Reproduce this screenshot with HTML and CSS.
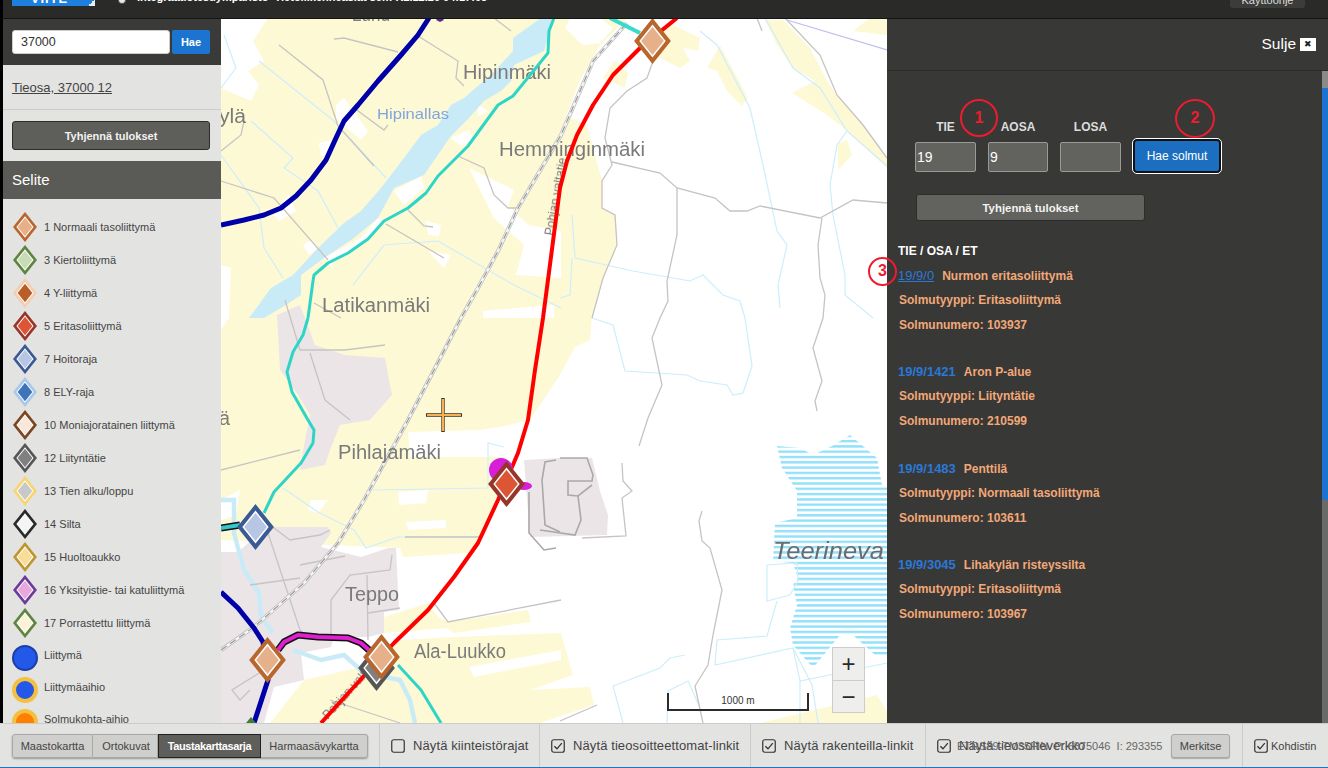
FILE: index.html
```html
<!DOCTYPE html>
<html lang="fi">
<head>
<meta charset="utf-8">
<title>Viite</title>
<link rel="stylesheet" href="styles.css">
</head>
<body>
<svg class="defs" width="0" height="0">
  <defs>
    <symbol id="dia" viewBox="0 0 24 30">
      <polygon class="do" points="12,0 24,15 12,30 0,15"/>
      <polygon points="12,4.2 20.6,15 12,25.8 3.4,15" fill="#fff"/>
      <polygon class="di" points="12,5.8 19.4,15 12,24.2 4.6,15"/>
    </symbol>
    <symbol id="chk" viewBox="0 0 14 14">
      <rect x="0.75" y="0.75" width="12.5" height="12.5" rx="2" fill="none" stroke="#333" stroke-width="1.2"/>
      <path d="M3.4 7.2 L6 9.8 L10.8 4.2" fill="none" stroke="#333" stroke-width="1.3"/>
    </symbol>
    <symbol id="unchk" viewBox="0 0 14 14">
      <rect x="0.75" y="0.75" width="12.5" height="12.5" rx="2" fill="none" stroke="#333" stroke-width="1.2"/>
    </symbol>
    <pattern id="marsh" width="10" height="5.3" patternUnits="userSpaceOnUse">
      <rect width="10" height="2.4" fill="#93e0fb"/>
    </pattern>
  </defs>
</svg>

<header class="topbar">
  <div class="logo"><span>VIITE</span><i class="fold"></i></div>
  <span class="dot"></span>
  <span class="envtext">Integraatiotestiympäristö  Tietoliikenneasiat ser.: K1.12.20 04:17:05</span>
  <a class="help">Käyttöohje</a>
</header>

<main class="main">
  <aside class="side">
    <div class="search">
      <input class="search-input" value="37000">
      <button class="search-btn">Hae</button>
    </div>
    <div class="hit"><a class="hit-link">Tieosa, 37000 12</a></div>
    <div class="clear-wrap"><button class="clear-btn">Tyhjennä tulokset</button></div>
    <h2 class="legend-title">Selite</h2>
    <ul class="legend">
      <li class="row t1"><svg class="dsym"><use href="#dia"/></svg>1 Normaali tasoliittymä</li>
      <li class="row t3"><svg class="dsym"><use href="#dia"/></svg>3 Kiertoliittymä</li>
      <li class="row t4"><svg class="dsym"><use href="#dia"/></svg>4 Y-liittymä</li>
      <li class="row t5"><svg class="dsym"><use href="#dia"/></svg>5 Eritasoliittymä</li>
      <li class="row t7"><svg class="dsym"><use href="#dia"/></svg>7 Hoitoraja</li>
      <li class="row t8"><svg class="dsym"><use href="#dia"/></svg>8 ELY-raja</li>
      <li class="row t10"><svg class="dsym"><use href="#dia"/></svg>10 Moniajoratainen liittymä</li>
      <li class="row t12"><svg class="dsym"><use href="#dia"/></svg>12 Liityntätie</li>
      <li class="row t13"><svg class="dsym"><use href="#dia"/></svg>13 Tien alku/loppu</li>
      <li class="row t14"><svg class="dsym"><use href="#dia"/></svg>14 Silta</li>
      <li class="row t15"><svg class="dsym"><use href="#dia"/></svg>15 Huoltoaukko</li>
      <li class="row t16"><svg class="dsym"><use href="#dia"/></svg>16 Yksityistie- tai katuliittymä</li>
      <li class="row t17"><svg class="dsym"><use href="#dia"/></svg>17 Porrastettu liittymä</li>
      <li class="crow first"><span class="circ c-a"></span>Liittymä</li>
      <li class="crow"><span class="circ c-b"></span>Liittymäaihio</li>
      <li class="crow"><span class="circ c-c"></span>Solmukohta-aihio</li>
    </ul>
  </aside>

  <section class="map">
    <svg class="mapsvg" viewBox="221 19 666 704" width="666" height="704">
      <rect x="221" y="19" width="666" height="704" fill="#fff"/>
      <g class="yellow tile">
        <polygon points="268,18 253,41 264,61 248,71 259,85 251,101 221,88 221,265 231,268 229,318 221,330 221,540 400,548 403,557 468,553 481,537 498,495 505,457 410,457 408,432 480,430 500,427 530,420 560,375 575,347 590,340 592,318 603,278 617,245 615,215 602,208 602,181 595,155 587,125 570,118 563,125 580,80 600,45 628,18"/>
        <polygon points="673,25 700,38 698,51 683,48 690,61 680,68 660,58 640,40"/>
        <polygon points="628,73 625,88 603,78 615,60"/>
        <polygon points="384,617 428,603 438,617 448,622 528,610 531,622 454,633 448,628 384,633"/>
        <polygon points="270,723 304,680 370,665 400,640 454,637 561,633 573,675 530,690 590,687 594,705 540,723"/>
        <polygon points="760,723 877,695 887,711 887,723"/>
        <polygon points="765,20 783,20 810,48 827,81 837,95 863,125 887,158 887,168 847,131 827,115 792,93 815,81 793,68 777,45"/>
        <polygon points="853,31 870,18 887,18 887,35"/>
        <polygon points="838,143 847,140 852,155 838,170"/>
        <polygon points="707,68 720,45 748,98 742,106 727,91 717,71"/>
      </g>
      <g class="whites tile">
        <polygon points="336,105 344,98 368,131 361,140 336,118"/>
        <polygon points="319,143 331,140 329,155 321,156"/>
        <polygon points="274,215 288,195 296,211 279,221"/>
        <polygon points="303,245 311,240 318,248 309,255"/>
        <polygon points="394,191 421,176 424,188 404,205"/>
        <polygon points="324,258 361,238 378,218 384,221 368,241 331,261 334,270"/>
        <polygon points="451,138 469,130 473,140 461,146"/>
        <polygon points="478,105 488,111 478,116"/>
        <polygon points="469,168 514,190 508,205 528,225 561,231 561,278 516,275 524,245 494,218"/>
        <polygon points="426,221 441,225 439,236 428,235"/>
        <polygon points="428,251 451,255 444,268"/>
        <polygon points="483,311 554,305 554,318 483,318"/>
        <polygon points="398,492 428,490 426,503 399,505"/>
        <polygon points="406,522 446,520 446,528 408,530"/>
        <polygon points="311,500 328,500 318,513 308,510"/>
        <polygon points="565,28 583,45 600,43 613,28 600,18 570,18"/>
        <polygon points="469,667 561,650 561,660 474,677"/>
        <polygon points="221,500 240,490 236,515 221,520"/>
      </g>
      <g class="resid tile">
        <polygon points="277,315 300,305 315,345 345,355 385,358 392,395 370,420 340,425 330,450 325,465 300,470 305,440 310,415 298,395 280,370"/>
        <polygon points="221,552 238,552 266,527 328,527 331,533 321,547 361,557 388,548 396,548 399,610 384,612 384,633 368,637 334,637 331,647 301,653 304,680 274,687 264,723 221,723"/>
        <polygon points="524,460 560,458 592,458 600,491 608,515 607,535 530,537"/>
      </g>
      <polygon class="water tile" points="249,318 271,288 293,275 318,248 344,223 361,211 381,188 404,158 421,135 438,125 451,105 464,98 493,73 513,51 513,38 541,18 554,18 544,51 514,65 511,81 501,91 484,101 469,118 451,136 424,175 394,188 378,218 354,238 324,258 301,275 301,295 281,308 264,318"/>
      <polygon class="tile" fill="url(#marsh)" points="777,446 800,448 813,455 832,446 850,435 877,458 882,485 887,485 887,655 875,655 853,635 840,635 813,668 793,645 790,628 797,605 793,585 798,578 793,563 773,561 775,523 797,518 797,491 782,468"/>
      <polyline class="stream tile" points="293,650 321,660 344,655 364,673 400,680 410,700 415,723"/>
      <polyline class="stream tile" points="221,500 234,500 234,533 244,570 259,593 261,617 273,633"/>
      <g class="wl tile">
        <polyline points="259,61 334,121 386,178"/>
        <polyline points="251,121 293,158 284,168 318,191 338,228"/>
        <polyline points="224,35 236,68 221,88"/>
        <polyline points="221,155 259,208 264,248 283,278"/>
        <polyline points="353,285 384,245 438,241 514,285 561,308"/>
        <polyline points="700,31 717,45 750,108 763,165 777,231 787,245 778,285 780,308"/>
        <polyline points="765,18 793,68 820,88 847,131 837,145 830,185 833,215 845,275 845,295 873,318"/>
        <polyline points="847,131 887,166"/>
        <polyline points="572,215 575,258 633,271 690,281 703,275 723,295 740,301 745,318 752,366 743,393 733,395 727,385 700,381 687,375 625,371 613,325 592,318"/>
        <polyline points="572,258 570,295 560,298"/>
        <polyline points="767,565 797,563 798,581 790,595 767,601 767,565"/>
        <polyline points="777,601 767,636 717,640 715,665 793,648 800,681 887,663"/>
        <polyline points="613,686 660,668 670,658 685,655"/>
        <polyline points="613,686 623,723"/>
        <polyline points="667,723 668,691 688,681 700,708"/>
        <polyline points="283,488 318,512 354,530 366,548 398,537 481,537"/>
        <polyline points="373,490 488,488 488,443 504,447"/>
        <polyline points="800,681 800,723"/>
        <polyline points="793,648 812,685 818,723"/>
      </g>
      <g class="rd tile">
        <polyline points="279,45 323,80 338,126 374,166"/>
        <polyline points="334,39 344,38 398,52"/>
        <polyline points="418,36 458,61 456,78 464,86"/>
        <polyline points="354,108 384,130 388,125"/>
        <polyline points="221,181 274,198 328,260"/>
        <polyline points="221,151 241,135 244,121"/>
        <polyline points="408,210 424,226 433,227"/>
        <polyline points="386,224 444,258"/>
        <polyline points="458,156 484,168 494,195 508,208 518,208"/>
        <polyline points="494,18 511,31"/>
        <polyline points="314,303 341,318"/>
        <polyline points="653,61 647,78 627,91 610,108 605,138 612,165 602,181 602,208 615,215 617,245 603,278 592,318"/>
        <polyline points="612,162 660,173 677,188 715,198 730,211 747,211 760,206 820,218 853,200 887,203"/>
        <polyline points="677,188 677,235 667,281 668,301 660,318 652,338 662,385 648,418 639,446"/>
        <polyline points="822,218 818,245 820,278 825,295 823,318 813,348 822,381 815,401 817,411"/>
        <polyline points="785,18 820,55 837,95 863,125 887,158"/>
        <polyline points="757,18 762,31"/>
        <polyline points="702,511 699,521 702,541 710,548 722,590 713,635 708,665 695,686 703,723"/>
        <polyline points="622,463 623,481 632,491 622,498 626,536 582,538"/>
        <polyline points="561,600 448,622 434,603"/>
        <polyline points="597,705 560,721"/>
        <polyline points="270,525 290,540 320,535 330,530"/>
        <polyline points="266,527 300,630 310,640"/>
        <polyline points="300,565 345,556"/>
        <polyline points="250,585 300,578"/>
        <polyline points="331,640 331,600 350,575 390,570 392,555"/>
        <polyline points="367,575 368,640"/>
        <polyline points="368,613 400,608"/>
        <polyline points="405,537 481,537"/>
        <polyline points="280,660 232,690 240,700 250,690"/>
        <polyline points="330,700 400,723"/>
        <polyline points="285,300 300,350 345,350 385,345"/>
        <polyline points="310,353 325,400 350,420"/>
        <polyline points="221,470 300,450"/>
      </g>
      <g class="rd dark tile">
        <polyline points="560,458 587,458 593,475 592,481 568,481 568,495 578,496 592,485"/>
        <polyline points="578,496 581,520 575,535 540,530"/>
        <polyline points="529,492 529,533 544,550 556,548"/>
        <polyline points="556,460 545,462 542,480 545,525 560,532"/>
      </g>
      <g class="rail tile">
        <polyline class="r1" points="221,650 254,627 304,583 338,543 364,500 408,420 461,318 478,288 498,251 518,208 561,135 593,61 627,23"/>
        <polyline class="r2" points="221,650 254,627 304,583 338,543 364,500 408,420 461,318 478,288 498,251 518,208 561,135 593,61 627,23"/>
        <polyline class="r3" points="221,650 254,627 304,583 338,543 364,500 408,420 461,318 478,288 498,251 518,208 561,135 593,61 627,23"/>
      </g>
      <polyline class="purple" points="787,20 887,50"/>
      <g class="labels tile">
        <text x="463" y="79" textLength="88" lengthAdjust="spacingAndGlyphs">Hipinmäki</text>
        <text x="499" y="156" textLength="146" lengthAdjust="spacingAndGlyphs">Hemminginmäki</text>
        <text x="322" y="312" textLength="108" lengthAdjust="spacingAndGlyphs">Latikanmäki</text>
        <text x="338" y="459" textLength="103" lengthAdjust="spacingAndGlyphs">Pihlajamäki</text>
        <text x="345" y="601" textLength="54" lengthAdjust="spacingAndGlyphs">Teppo</text>
        <text x="414" y="658" textLength="92" lengthAdjust="spacingAndGlyphs">Ala-Luukko</text>
        <text x="219" y="123" textLength="27" lengthAdjust="spacingAndGlyphs">ylä</text>
        <text x="219" y="425" textLength="11" lengthAdjust="spacingAndGlyphs">ä</text>
        <text x="352" y="21" textLength="38" lengthAdjust="spacingAndGlyphs">Lund</text>
        <text class="teeri" x="773" y="559" textLength="111" lengthAdjust="spacingAndGlyphs">Teerineva</text>
        <text class="lake" x="377" y="119" textLength="72" lengthAdjust="spacingAndGlyphs">Hipinallas</text>
      </g>
      <text class="roadname tile" transform="translate(553,236) rotate(-80)">Pohjan valtatie</text>
      <text class="roadname tile" transform="translate(328,720) rotate(-48)">Pohjan valtatie</text>
      <g class="roads">
        <polyline class="blue" points="221,225 244,220 264,215 281,208 296,196 311,180 326,160 336,138 344,121 358,105 378,81 401,55 418,35 429,18"/>
        <polyline class="blue" points="221,592 238,608 254,628 263,642 268,680 254,723"/>
        <polyline class="teal" points="308,318 303,335 293,352 287,372 292,392 308,420 314,430 313,443 301,463 274,492 264,513"/>
        <polyline class="teal" points="308,318 313,281 314,275 328,263 348,253 368,239 384,221 408,208 426,193 438,176 468,146 498,105 513,96 548,53 549,31 554,18"/>
        <polyline class="teal" points="398,665 421,690 441,723"/>
        <polyline class="tealw" points="610,18 640,33"/>
        <polyline class="tb" points="221,528 240,525"/>
        <polyline class="tbi" points="221,528 240,525"/>
        <polyline class="red" points="677,18 640,48 613,75 593,105 577,135 567,161 560,188 543,318 535,370 528,420 518,453 498,500 478,543 454,577 428,610 394,643 321,723"/>
        <polyline class="mb" points="278,650 284,642 298,635 318,637 348,638 361,643 369,650"/>
        <polyline class="mg" points="278,650 284,642 298,635 318,637 348,638 361,643 369,650"/>
      </g>
      <g class="blob">
        <circle cx="501" cy="470" r="12"/>
        <ellipse cx="524" cy="486" rx="8" ry="4"/>
      </g>
      <polygon class="tiny-g" points="251,717 256,723 246,723"/>
      <polygon class="tiny-p" points="440,16 444,20 440,22 436,20"/>
      <svg class="t12" x="358" y="645" width="37" height="46"><use href="#dia"/></svg>
      <svg class="t1" x="634" y="18" width="37" height="46"><use href="#dia"/></svg>
      <svg class="t7" x="237" y="504" width="37" height="46"><use href="#dia"/></svg>
      <svg class="t5" x="488" y="461" width="37" height="46"><use href="#dia"/></svg>
      <svg class="t1" x="249" y="637" width="37" height="46"><use href="#dia"/></svg>
      <svg class="t1" x="363" y="634" width="37" height="46"><use href="#dia"/></svg>
      <g class="cross">
        <path class="cross-o" d="M443 398V432M426 415H462"/>
        <path class="cross-i" d="M443 399V431M427 415H461"/>
      </g>
      <path class="scale" d="M668 693V710H808V693"/>
      <text class="scale-t" x="738" y="704">1000 m</text>
    </svg>
    <div class="zoomctl">
      <button class="zbtn">+</button>
      <button class="zbtn">−</button>
    </div>
  </section>

  <section class="panel">
    <div class="panel-head">
      <span class="close-t">Sulje</span><span class="close-x">✖</span>
    </div>
    <div class="panel-body">
      <div class="panel-content">
        <div class="form">
          <div class="field w61"><label>TIE</label><input class="fld" value="19"></div>
          <div class="field w60"><label>AOSA</label><input class="fld" value="9"></div>
          <div class="field w61"><label>LOSA</label><input class="fld" value=""></div>
          <button class="find">Hae solmut</button>
        </div>
        <button class="clear2">Tyhjennä tulokset</button>
        <div class="res-h">TIE / OSA / ET</div>
        <div class="group">
          <div class="rrow"><a class="rlink under">19/9/0</a><span class="rname">Nurmon eritasoliittymä</span></div>
          <div class="rrow det">Solmutyyppi: Eritasoliittymä</div>
          <div class="rrow det">Solmunumero: 103937</div>
        </div>
        <div class="group">
          <div class="rrow"><a class="rlink">19/9/1421</a><span class="rname">Aron P-alue</span></div>
          <div class="rrow det">Solmutyyppi: Liityntätie</div>
          <div class="rrow det">Solmunumero: 210599</div>
        </div>
        <div class="group">
          <div class="rrow"><a class="rlink">19/9/1483</a><span class="rname">Penttilä</span></div>
          <div class="rrow det">Solmutyyppi: Normaali tasoliittymä</div>
          <div class="rrow det">Solmunumero: 103611</div>
        </div>
        <div class="group">
          <div class="rrow"><a class="rlink">19/9/3045</a><span class="rname">Lihakylän risteyssilta</span></div>
          <div class="rrow det">Solmutyyppi: Eritasoliittymä</div>
          <div class="rrow det">Solmunumero: 103967</div>
        </div>
      </div>
      <div class="sbar"><div class="sb-cap"></div><div class="sb-thumb"></div><div class="sb-rest"></div></div>
    </div>
  </section>

  <span class="mark m1">1</span>
  <span class="mark m2">2</span>
  <span class="mark m3">3</span>
</main>

<footer class="foot">
  <div class="f-sec f-base">
    <div class="seg">
      <button class="sb s1">Maastokartta</button><button class="sb s2">Ortokuvat</button><button class="sb s3 on">Taustakarttasarja</button><button class="sb s4">Harmaasävykartta</button>
    </div>
  </div>
  <div class="f-sec f1"><svg class="cb"><use href="#unchk"/></svg>Näytä kiinteistörajat</div>
  <div class="f-sec f2"><svg class="cb"><use href="#chk"/></svg>Näytä tieosoitteettomat-linkit</div>
  <div class="f-sec f3"><svg class="cb"><use href="#chk"/></svg>Näytä rakenteilla-linkit</div>
  <div class="f-sec f4"><svg class="cb"><use href="#chk"/></svg>Näytä tieosoiteverkko
    <span class="coords">ETRS89-TM35FIN  P: 6875046  I: 293355</span>
    <button class="merk">Merkitse</button>
  </div>
  <div class="f-sec f5"><svg class="cb"><use href="#chk"/></svg><span class="koh">Kohdistin</span></div>
</footer>
</body>
</html>
```

FILE: styles.css
```css
* { box-sizing: border-box; }
html, body { margin: 0; padding: 0; height: 100%; overflow: hidden; }
body {
  width: 1328px; height: 768px;
  display: flex; flex-direction: column;
  font-family: "Liberation Sans", Arial, sans-serif;
  background: #000;
}
.defs { position: absolute; }
button { font-family: inherit; cursor: pointer; }
ul { list-style: none; margin: 0; padding: 0; }

/* top bar */
.topbar {
  height: 19px; flex: none; display: flex; align-items: flex-start;
  background: #2a2a29; border-left: 3px solid #000; border-bottom: 1px solid #141414;
  overflow: hidden; position: relative;
}
.logo {
  margin-left: 9px; width: 83px; height: 6px; background: #1e7fdc;
  color: #fff; font-weight: bold; font-size: 13px; line-height: 1; text-align: center;
  position: relative; overflow: hidden;
}
.logo span { display: block; margin-top: -8px; letter-spacing: 1px; padding-right: 8px; }
.fold {
  position: absolute; right: 0; bottom: 0; width: 8px; height: 6px;
  background: linear-gradient(135deg, #1e7fdc 50%, #e8eef5 50%);
}
.dot {
  width: 8px; height: 4px; margin-left: 23px; background: #e8e8e8; border-radius: 0 0 5px 5px;
  border: 1px solid #555; border-top: none;
}
.envtext {
  margin-left: 11px; margin-top: -9px; color: #fff; font-size: 11px; font-weight: bold;
  line-height: 13px; white-space: pre;
}
.help {
  margin-left: auto; margin-right: 23px; margin-top: -6px; width: 75px; height: 14px;
  background: #3c3c3a; color: #ddd; font-size: 11px; line-height: 13px; text-align: center; border-radius: 3px;
}

/* main */
.main { flex: 1; min-height: 0; display: flex; position: relative; }

.side {
  width: 221px; flex: none; background: #e3e3e2; border-left: 3px solid #000;
  display: flex; flex-direction: column; overflow: hidden;
}
.search { height: 46px; background: #3a3a38; padding: 11px 0 0 9px; display: flex; gap: 2px; flex: none; }
.search-input {
  width: 158px; height: 24px; padding: 0 8px; border: 1px solid #ccc; border-radius: 3px;
  font: 12.5px "Liberation Sans", Arial, sans-serif; color: #333; background: #fff;
}
.search-btn {
  width: 38px; height: 24px; border: none; border-radius: 2px; padding: 0;
  background: #1b75d0; color: #fff; font-size: 11px; font-weight: bold;
}
.hit { height: 45px; flex: none; padding: 13px 0 0 9px; border-bottom: 1px solid #ccc; }
.hit-link { font-size: 13px; line-height: 16px; color: #444; text-decoration: underline; }
.clear-wrap { flex: none; padding: 11px 11px 11px 9px; }
.clear-btn {
  width: 198px; height: 29px; padding: 0; background: #5e5e5a; border: 1px solid #2c2c2a; border-radius: 3px;
  color: #f2f2f2; font-size: 11px; font-weight: bold;
}
.legend-title {
  margin: 0; height: 38px; flex: none; background: #5a5a56; color: #fff;
  font-size: 15px; font-weight: normal; line-height: 38px; padding-left: 9px;
}
.legend { padding: 11px 0 0 0; }
.row { height: 33px; display: flex; align-items: center; font-size: 11px; color: #444; padding-left: 10px; white-space: nowrap; }
.dsym { width: 24px; height: 30px; margin-right: 7px; flex: none; }
.crow { height: 32px; display: flex; align-items: flex-start; font-size: 11px; line-height: 26px; color: #444; padding-left: 9px; white-space: nowrap; }
.crow.first { margin-top: 3px; }
.circ { width: 26px; height: 26px; border-radius: 50%; margin: 3px 6px 0 0; flex: none; }
.c-a { background: #2358e8; border: 2px solid #1a3fa8; }
.c-b { background: #2358e8; border: 4px solid #f5c040; }
.c-c { background: #ff8000; border: 4px solid #f5c040; }

/* symbol colours */
.do { fill: var(--o); }
.di { fill: var(--i); }
.t1 { --o: #b8652e; --i: #e6b08a; }
.t3 { --o: #5f8440; --i: #c9dcb8; }
.t4 { --o: #f5cdb0; --i: #b85f28; }
.t5 { --o: #96352a; --i: #dc5636; }
.t7 { --o: #3a5a94; --i: #b6c6e4; }
.t8 { --o: #a9c9ea; --i: #3f74b8; }
.t10 { --o: #7b4520; --i: #f8e8dc; }
.t12 { --o: #555555; --i: #808080; }
.t13 { --o: #f8d570; --i: #c8c8c8; }
.t14 { --o: #2a2a2a; --i: #f4f4f4; }
.t15 { --o: #bf9530; --i: #f8dd98; }
.t16 { --o: #6c3a98; --i: #e8a8dc; }
.t17 { --o: #5f8440; --i: #fbf2d8; }

/* map */
.map { width: 666px; flex: none; position: relative; overflow: hidden; }
.mapsvg { display: block; }
.tile { filter: blur(0.4px); }
.yellow polygon { fill: #fef9d5; }
.whites polygon { fill: #fff; }
.resid polygon { fill: #ebe5e8; }
.water { fill: #c8ebf7; }
.stream { fill: none; stroke: #c8ebf7; stroke-width: 4.5; }
.wl polyline { fill: none; stroke: #cdeefb; stroke-width: 1.2; }
.rd polyline { fill: none; stroke: #c6c4c2; stroke-width: 1.3; }
.rd.dark polyline { stroke: #aaa8a8; stroke-width: 1.6; }
.rail polyline { fill: none; }
.r1 { stroke: #bcbcbc; stroke-width: 4; }
.r2 { stroke: #f4f4f2; stroke-width: 2.6; }
.r3 { stroke: #9a9a9a; stroke-width: 1.2; stroke-dasharray: 7 4; }
.purple { fill: none; stroke: #c3bbee; stroke-width: 1.2; }
.labels text { font-family: "Liberation Sans", Arial, sans-serif; font-size: 20px; fill: #7a7a7a; }
.labels .teeri { font-size: 24px; font-style: italic; fill: #6c6c6c; }
.labels .lake { font-size: 15px; fill: #7ea6dc; }
.roadname { font-family: "Liberation Sans", Arial, sans-serif; font-size: 12px; fill: #777; }
.roads polyline { fill: none; stroke-linejoin: round; }
.blue { stroke: #0000a8; stroke-width: 5; }
.teal { stroke: #2ed5c6; stroke-width: 3; }
.tealw { stroke: #35dccd; stroke-width: 4; }
.tb { stroke: #111; stroke-width: 7; }
.tbi { stroke: #36c6cc; stroke-width: 4; }
.red { stroke: #ff0000; stroke-width: 4; }
.mb { stroke: #111; stroke-width: 7; }
.mg { stroke: #e020d0; stroke-width: 4; }
.blob { fill: #d61fd6; }
.tiny-g { fill: #3f7c35; }
.tiny-p { fill: #5a2a90; }
.cross path { fill: none; }
.cross-o { stroke: #333; stroke-width: 3.4; }
.cross-i { stroke: #f8b050; stroke-width: 2.2; }
.scale { fill: none; stroke: #2b2b2b; stroke-width: 2; }
.scale-t { font-family: "Liberation Sans", Arial, sans-serif; font-size: 10px; fill: #333; text-anchor: middle; }
.zoomctl {
  position: absolute; left: 611px; top: 628px; width: 33px;
  display: flex; flex-direction: column;
  border: 1px solid #ccc; background: #eeeeec;
}
.zbtn {
  height: 32px; padding: 0; border: none; background: transparent; color: #2a2a2a;
  font-size: 24px; line-height: 30px; font-weight: normal;
}
.zbtn + .zbtn { border-top: 1px solid #ccc; }

/* right panel */
.panel { width: 441px; flex: none; background: #383836; display: flex; flex-direction: column; overflow: hidden; }
.panel-head {
  height: 52px; flex: none; border-bottom: 1px solid #2a2a28; display: flex; align-items: center;
  justify-content: flex-end; padding: 0 12px 1px 0;
}
.close-t { color: #fff; font-size: 15.5px; }
.close-x {
  width: 16px; height: 13px; margin-left: 4px; background: #fff; color: #222;
  font-size: 9px; line-height: 13px; text-align: center;
}
.panel-body { flex: 1; min-height: 0; display: flex; }
.panel-content { flex: 1; min-width: 0; padding: 49px 0 0 0; }
.sbar { width: 6px; flex: none; display: flex; flex-direction: column; }
.sb-cap { height: 17px; background: #8a8a8a; }
.sb-thumb { height: 412px; background: #1b75d0; }
.sb-rest { flex: 1; background: #6a6a68; }

.form { display: flex; align-items: flex-end; padding-left: 28px; gap: 12px; }
.field { display: flex; flex-direction: column; align-items: center; }
.w61 { width: 61px; }
.w60 { width: 60px; }
.field label { font-size: 12px; font-weight: bold; line-height: 14px; color: #ddd; margin-bottom: 8px; }
.fld {
  width: 100%; height: 30px; padding: 0 1px; background: #62625e; border: 1px solid #9a9a96; border-radius: 2px;
  color: #fff; font: 14px "Liberation Sans", Arial, sans-serif;
}
.find {
  width: 88px; height: 34px; margin-bottom: -1px; padding: 0; background: #1c6fc0; color: #fff;
  border: 2px solid #111; outline: 1px solid #fff; outline-offset: 0; border-radius: 4px; font-size: 12px;
}
.clear2 {
  display: block; width: 229px; height: 27px; margin: 22px 0 0 29px; padding: 0; background: #62625e;
  border: 1px solid #2c2c2a; border-radius: 3px; color: #f2f2f2; font-size: 11.4px; font-weight: bold;
}
.res-h { margin: 23px 0 4.5px 11px; font-size: 12px; font-weight: bold; line-height: 14px; color: #fff; }
.group { margin-left: 11px; margin-bottom: 21.5px; }
.rrow { height: 25px; line-height: 25px; font-size: 12px; font-weight: bold; color: #f2a878; white-space: nowrap; }
.rrow.det { padding-left: 1px; }
.rlink { color: #2a78d8; font-size: 13px; margin-right: 8px; }
.rlink.under { text-decoration: underline; font-weight: normal; }

/* annotations */
.mark {
  position: absolute; border: 2.5px solid #ee1c2e; border-radius: 50%;
  color: #ee1c2e; font-weight: bold; font-size: 16px; text-align: center;
}
.m1 { left: 960px; top: 80px; width: 38px; height: 38px; line-height: 33px; }
.m2 { left: 1175px; top: 80px; width: 40px; height: 39px; line-height: 34px; }
.m3 { left: 868px; top: 238px; width: 29px; height: 29px; line-height: 24px; }

/* footer */
.foot {
  height: 45px; flex: none; display: flex; background: #e3e3e2;
  border-top: 1px solid #ccc; border-bottom: 1px solid #1b75d0;
  font-size: 13px; color: #444; letter-spacing: 0.1px;
}
.f-sec { display: flex; align-items: center; border-left: 1px solid #ccc; padding-left: 11px; white-space: nowrap; position: relative; }
.f-base { width: 379px; border-left: none; padding-left: 12px; letter-spacing: 0; }
.f1 { width: 160px; }
.f2 { width: 211px; }
.f3 { width: 175px; }
.f4 { width: 317px; }
.f5 { flex: 1; letter-spacing: 0; }
.cb { width: 14px; height: 14px; margin-right: 8px; flex: none; }
.f5 .cb { margin-right: 3px; }
.koh { font-size: 11px; }
.seg {
  display: flex; height: 24px; border-radius: 3px;
  box-shadow: 0 1px 2px rgba(0,0,0,.35);
}
.sb {
  height: 24px; padding: 0; background: #cfcfcd; border: 1px solid #a8a8a6; border-left: none;
  font-size: 11px; color: #444;
}
.s1 { width: 81px; border-left: 1px solid #a8a8a6; border-radius: 3px 0 0 3px; }
.s2 { width: 65px; padding-left: 2px; }
.s3 { width: 103px; }
.s4 { width: 107px; border-radius: 0 3px 3px 0; }
.sb.on { background: #5e5e5a; color: #fff; font-weight: bold; border: 1px solid #222; letter-spacing: -0.4px; }
.coords {
  position: absolute; left: 31px; top: 15px; font-size: 11px; line-height: 14px; color: #666; white-space: pre; letter-spacing: 0;
}
.merk {
  position: absolute; left: 245px; top: 10px; width: 59px; height: 24px; padding: 0;
  background: #cfcfcd; border: 1px solid #a8a8a6; border-radius: 3px; font-size: 11px; color: #444; letter-spacing: 0;
  box-shadow: 0 1px 1px rgba(0,0,0,.25);
}
```
